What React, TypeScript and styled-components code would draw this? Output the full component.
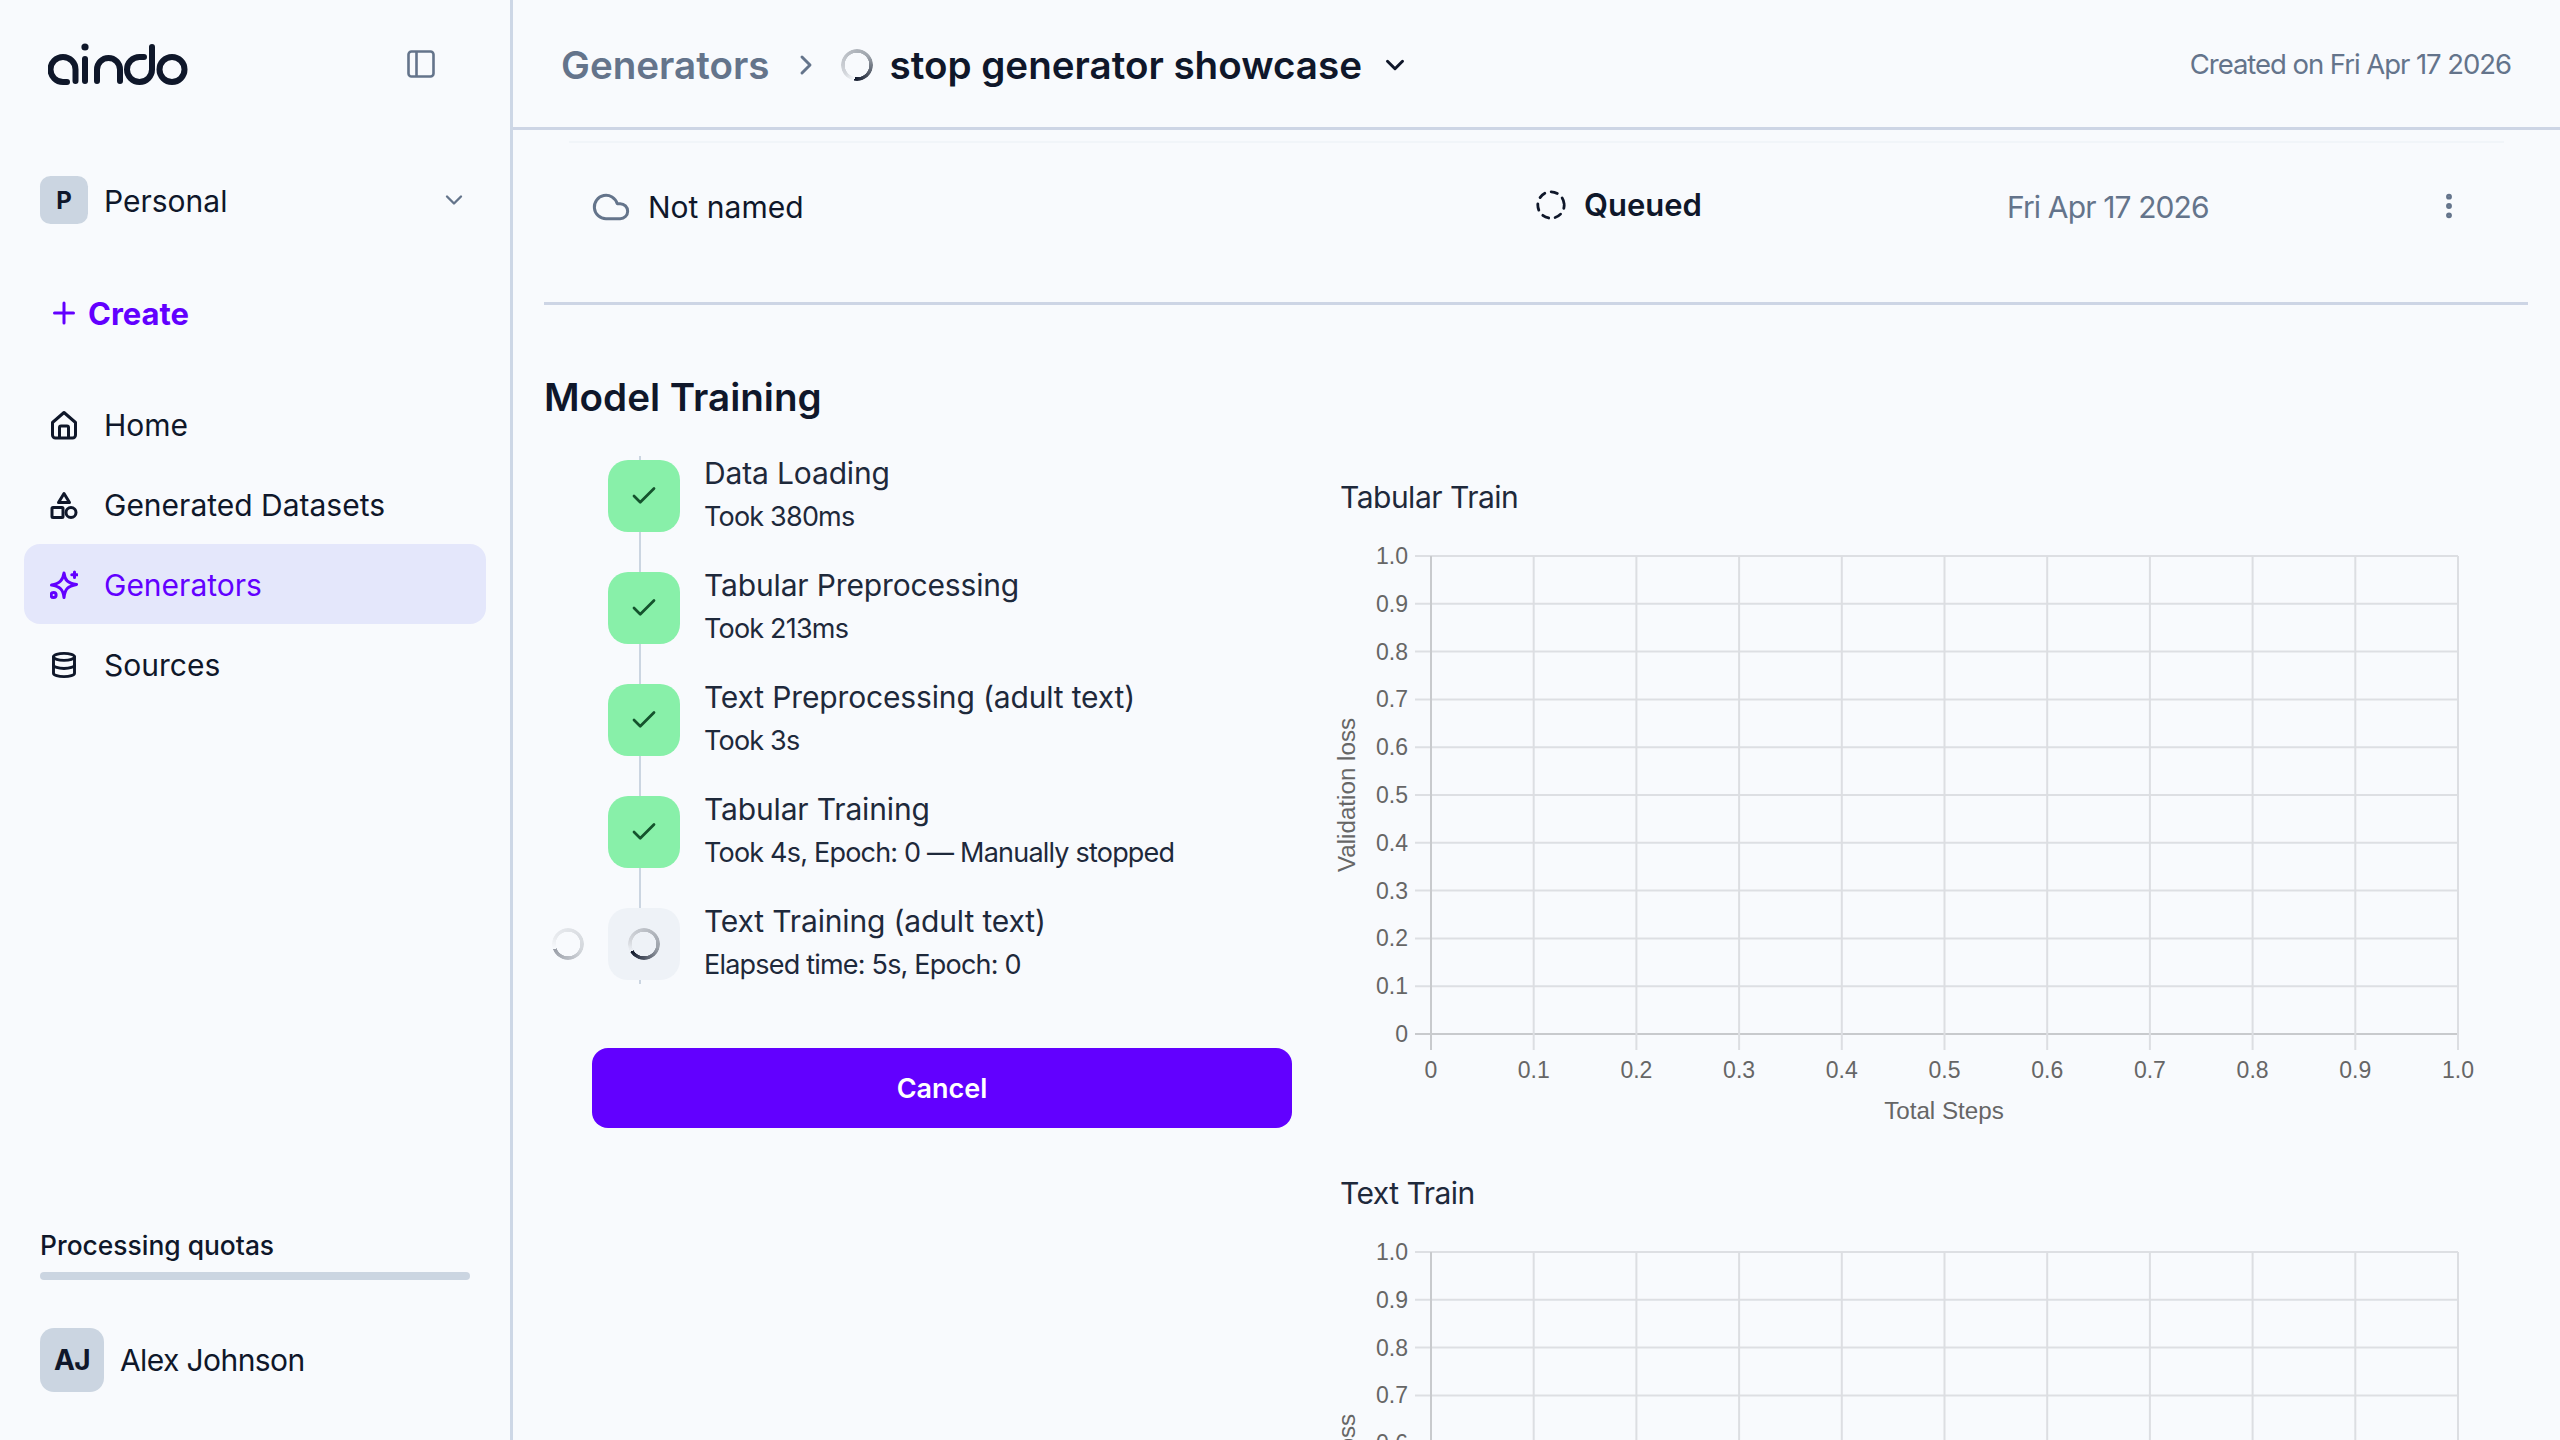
import styled, { createGlobalStyle } from 'styled-components';
import { Check, ChevronDown, ChevronRight, Cloud, Database, EllipsisVertical } from 'lucide-react';

const GlobalStyle = createGlobalStyle`
  html, body {
    margin: 0;
    padding: 0;
    background: #f8fafd;
  }

  body {
    font-family: Inter, "Noto Sans", sans-serif;
    color: #0f172a;
  }

  * {
    box-sizing: border-box;
  }
`;

const Page = styled.div`
  display: flex;
  width: 2560px;
  height: 1440px;
  overflow: hidden;
  background: #f8fafd;
`;

const Sidebar = styled.aside`
  display: flex;
  flex-direction: column;
  flex: 0 0 513px;
  border-right: 3px solid #cdd7e6;
`;

const LogoRow = styled.div`
  display: flex;
  align-items: center;
  justify-content: space-between;
  height: 128px;
  padding: 0 75px 0 48px;
`;

const Workspace = styled.div`
  display: flex;
  align-items: center;
  margin-top: 48px;
  padding: 0 42px 0 40px;
  font-size: 30px;
`;

const AvatarSquare = styled.div<{ $size: number }>`
  display: flex;
  align-items: center;
  justify-content: center;
  flex: none;
  width: ${p => p.$size}px;
  height: ${p => p.$size}px;
  border-radius: ${p => p.$size * 0.22}px;
  background: #cbd5e1;
  font-size: ${p => (p.$size > 50 ? 28 : 24)}px;
  font-weight: 700;
`;

const WorkspaceName = styled.span`
  flex: 1;
  margin-left: 16px;
  padding-top: 1px;
`;

const CreateRow = styled.div`
  display: flex;
  align-items: center;
  gap: 13px;
  height: 48px;
  margin-top: 65px;
  padding-left: 53px;
  color: #6200ff;
  font-size: 31px;
  font-weight: 700;
`;

const Nav = styled.nav`
  display: flex;
  flex-direction: column;
  margin-top: 47px;
`;

const NavItem = styled.div<{ $active?: boolean }>`
  display: flex;
  align-items: center;
  gap: 26px;
  width: 462px;
  height: 80px;
  margin-left: 24px;
  padding: 2px 0 0 26px;
  border-radius: 16px;
  background: ${p => (p.$active ? '#e4e7fb' : 'transparent')};
  color: ${p => (p.$active ? '#6200ff' : '#0f172a')};
  font-size: 30px;
  svg {
    flex: none;
  }
`;

const SideFooter = styled.div`
  display: flex;
  flex-direction: column;
  margin-top: auto;
  padding: 0 40px 48px;
`;

const QuotaLabel = styled.div`
  font-size: 26.4px;
  font-weight: 500;
  line-height: 32px;
`;

const QuotaBar = styled.div`
  width: 430px;
  height: 8px;
  margin-top: 11px;
  border-radius: 4px;
  background: #cbd5e1;
`;

const UserRow = styled.div`
  display: flex;
  align-items: center;
  gap: 16px;
  margin-top: 48px;
  font-size: 30px;
  letter-spacing: -0.6px;
`;

const Main = styled.main`
  display: flex;
  flex-direction: column;
  flex: 1;
  min-width: 0;
`;

const Header = styled.header`
  display: flex;
  align-items: center;
  justify-content: space-between;
  flex: none;
  height: 130px;
  padding: 0 49px 0 48px;
  border-bottom: 3px solid #cdd5e5;
`;

const Crumbs = styled.div`
  display: flex;
  align-items: center;
  padding-top: 2px;
  font-size: 38.6px;
  font-weight: 600;
`;

const CrumbParent = styled.span`
  color: #64748b;
`;

const CrumbChevron = styled(ChevronRight)`
  margin: 0 19px 0 21px;
  color: #64748b;
`;

const CrumbTitle = styled.span`
  margin: 0 18px 0 16px;
`;

const HeaderDate = styled.span`
  padding-top: 1px;
  color: #64748b;
  font-size: 27.5px;
  letter-spacing: -1.05px;
`;

const Spinner = styled.div<{ $size: number; $from: number; $faded?: boolean }>`
  flex: none;
  width: ${p => p.$size}px;
  height: ${p => p.$size}px;
  border-radius: 50%;
  background: conic-gradient(
    from ${p => p.$from}deg,
    transparent 0%,
    #d4d7dc 12%,
    #9ea4ac 62%,
    #0f172a 100%
  );
  -webkit-mask: radial-gradient(farthest-side, transparent calc(100% - 4px), #000 calc(100% - 3.5px));
  mask: radial-gradient(farthest-side, transparent calc(100% - 4px), #000 calc(100% - 3.5px));
  opacity: ${p => (p.$faded ? 0.4 : 1)};
`;

const Content = styled.div`
  flex: 1;
  min-height: 0;
  overflow: hidden;
  padding: 0 32px 0 31px;
`;

const TopRule = styled.div`
  height: 2px;
  margin: 11px 24px 0 25px;
  background: #f1f5f9;
`;

const RunRow = styled.div`
  display: grid;
  grid-template-columns: 945px 471px 426px 1fr;
  align-items: center;
  height: 162px;
  padding: 0 0 32px 47px;
  border-bottom: 3px solid #cdd5e5;
  font-size: 30px;
`;

const RunName = styled.div`
  display: flex;
  align-items: center;
  gap: 17px;
  svg {
    color: #64748b;
  }
`;

const RunStatus = styled.div`
  display: flex;
  align-items: center;
  gap: 18px;
  margin-top: -4px;
  font-size: 31px;
  font-weight: 600;
`;

const RunDate = styled.div`
  color: #64748b;
  letter-spacing: -0.87px;
`;

const RunMenu = styled(EllipsisVertical)`
  color: #64748b;
  margin-top: -2px;
`;

const SectionTitle = styled.h2`
  margin: 68px 0 0;
  font-size: 38.6px;
  font-weight: 600;
  line-height: 48px;
`;

const Body = styled.div`
  display: grid;
  grid-template-columns: 798px 1fr;
  margin-top: 35px;
`;

const StepColumn = styled.div`
  display: flex;
  flex-direction: column;
`;

const Stepper = styled.div`
  position: relative;
  display: flex;
  flex-direction: column;
  gap: 40px;
  margin: 4px 0 0 64px;
  &::before {
    content: '';
    position: absolute;
    left: 31px;
    top: -4px;
    bottom: -4px;
    width: 2px;
    background: #cbd5e1;
  }
`;

const Step = styled.div`
  position: relative;
  display: flex;
  gap: 24px;
  height: 72px;
`;

const StepBox = styled.div<{ $done?: boolean }>`
  position: relative;
  display: flex;
  align-items: center;
  justify-content: center;
  flex: none;
  width: 72px;
  height: 72px;
  border-radius: 20px;
  background: ${p => (p.$done ? '#88f0a9' : '#eef2f7')};
  color: #14532d;
`;

const StepSideSpinner = styled.div`
  position: absolute;
  left: -56px;
  top: 20px;
`;

const StepText = styled.div`
  display: flex;
  flex-direction: column;
  gap: 8px;
  margin-top: -5px;
`;

const StepTitle = styled.div`
  color: #1e293b;
  font-size: 30px;
  letter-spacing: -0.15px;
  line-height: 36px;
`;

const StepDetail = styled.div`
  color: #1e293b;
  font-size: 27px;
  letter-spacing: -0.8px;
  line-height: 36px;
`;

const CancelButton = styled.button`
  width: 700px;
  height: 80px;
  margin: 68px 0 0 48px;
  border: none;
  border-radius: 16px;
  background: #6200ff;
  color: #fff;
  font-family: inherit;
  font-size: 27px;
  font-weight: 600;
`;

const ChartColumn = styled.div`
  display: flex;
  flex-direction: column;
  gap: 35px;
  margin-top: 23px;
`;

const ChartBlock = styled.section`
  display: flex;
  flex-direction: column;
  gap: 15px;
`;

const ChartTitle = styled.div`
  margin-left: -2px;
  color: #1e293b;
  font-size: 30px;
  letter-spacing: -0.5px;
  line-height: 36px;
`;

const ChartSvg = styled.svg`
  display: block;
  overflow: visible;
  flex: none;
  text {
    fill: #666;
    font-family: "Liberation Sans", Arial, sans-serif;
    font-size: 23px;
  }
`;

const AxisLabel = styled.text`
  && {
    font-size: 24.2px;
  }
`;

function Logo() {
  return (
    <svg width="140" height="44" viewBox="48 42 140 44" fill="none" stroke="#0f172a" strokeWidth="6" strokeLinecap="round" aria-label="aindo">
      <path d="M75.5 81V69.5A12.5 12.5 0 1 0 63 82H67" />
      <path d="M85 59V81" />
      <circle cx="85" cy="47" r="3.6" fill="#0f172a" stroke="none" />
      <path d="M97 81V69.5A11.5 11.5 0 0 1 120 69.5V81" />
      <path d="M152 47V69.5A12.5 12.5 0 1 1 139.5 57H144" />
      <circle cx="172" cy="69.5" r="12.5" />
    </svg>
  );
}

function PanelIcon() {
  return (
    <svg width="28" height="28" viewBox="0 0 28 28" fill="none" stroke="#64748b" strokeWidth="2.6" strokeLinejoin="round">
      <rect x="1.5" y="1.5" width="25" height="25" rx="3" />
      <path d="M9.5 1.5V26.5" />
    </svg>
  );
}

function PlusIcon() {
  return (
    <svg width="22" height="24" viewBox="0 0 22 24" fill="none" stroke="#6200ff" strokeWidth="3" strokeLinecap="round">
      <path d="M11 2V22M1.5 12H20.5" />
    </svg>
  );
}

function HomeIcon() {
  return (
    <svg width="28" height="30" viewBox="0 0 28 30" fill="none" stroke="currentColor" strokeWidth="3" strokeLinejoin="round">
      <path d="M2.5 12.5L14 2.5L25.5 12.5V25a3 3 0 0 1-3 3H5.5a3 3 0 0 1-3-3Z" />
      <path d="M9.5 28V17.5a1.5 1.5 0 0 1 1.5-1.5h6a1.5 1.5 0 0 1 1.5 1.5V28" />
    </svg>
  );
}

function ShapesIcon() {
  return (
    <svg width="28" height="28" viewBox="0 0 28 28" fill="none" stroke="currentColor" strokeWidth="3" strokeLinejoin="round">
      <path d="M14 2.5L19.5 11.5H8.5Z" />
      <rect x="2" y="16.5" width="11" height="10" rx="1" />
      <circle cx="21" cy="21.5" r="5" />
    </svg>
  );
}

function SparkIcon() {
  return (
    <svg width="28" height="30" viewBox="0 0 28 30" fill="none" stroke="currentColor" strokeWidth="3" strokeLinecap="round" strokeLinejoin="round">
      <path d="M14 3C14.8 10 17.5 13 26.5 14.5C17.5 16.5 15 19 14 27.5C13 19.5 10 16.5 1.5 15C10 13.5 13 10 14 3Z" />
      <path d="M24.5 2V7.5M21.8 4.8H27.2" />
      <circle cx="3.6" cy="25" r="2.5" />
    </svg>
  );
}

function QueuedIcon() {
  return (
    <svg width="30" height="30" viewBox="0 0 30 30" fill="none" stroke="#0f172a" strokeWidth="2.8" strokeLinecap="round">
      <circle cx="15" cy="15" r="13.2" strokeDasharray="6.4 6.6" strokeDashoffset="3" />
    </svg>
  );
}

const TICKS = [0, 0.1, 0.2, 0.3, 0.4, 0.5, 0.6, 0.7, 0.8, 0.9, 1];
const tickLabel = (v: number) => (v === 0 ? '0' : v.toFixed(1));

function TrainChart() {
  const left = 89;
  const right = 1116;
  const top = 26;
  const bottom = 504;
  const stepX = (right - left) / 10;
  const stepY = (bottom - top) / 10;
  return (
    <ChartSvg width="1180" height="610" viewBox="0 0 1180 610">
      {TICKS.map((v, i) => {
        const y = bottom - i * stepY;
        return (
          <g key={v}>
            <line x1={left - 16} x2={right} y1={y} y2={y} stroke={i === 0 ? '#c8cacd' : '#dddfe3'} strokeWidth="2" />
            <text x={left - 23} y={y + 8} textAnchor="end">{tickLabel(v)}</text>
          </g>
        );
      })}
      {TICKS.map((v, i) => {
        const x = left + i * stepX;
        return (
          <g key={v}>
            <line x1={x} x2={x} y1={top} y2={bottom + 16} stroke={i === 0 ? '#c8cacd' : '#dcdee2'} strokeWidth="2" />
            <text x={x} y={548} textAnchor="middle">{tickLabel(v)}</text>
          </g>
        );
      })}
      <AxisLabel x={602} y={589} textAnchor="middle">Total Steps</AxisLabel>
      <AxisLabel x={13} y={265} textAnchor="middle" transform="rotate(-90 13 265)">Validation loss</AxisLabel>
    </ChartSvg>
  );
}

const STEPS = [
  { title: 'Data Loading', detail: 'Took 380ms', done: true },
  { title: 'Tabular Preprocessing', detail: 'Took 213ms', done: true },
  { title: 'Text Preprocessing (adult text)', detail: 'Took 3s', done: true },
  { title: 'Tabular Training', detail: 'Took 4s, Epoch: 0 — Manually stopped', done: true },
  { title: 'Text Training (adult text)', detail: 'Elapsed time: 5s, Epoch: 0', done: false },
];

export default function App() {
  return (
    <Page>
      <GlobalStyle />
      <Sidebar>
        <LogoRow>
          <Logo />
          <PanelIcon />
        </LogoRow>
        <Workspace>
          <AvatarSquare $size={48}>P</AvatarSquare>
          <WorkspaceName>Personal</WorkspaceName>
          <ChevronDown size={28} color="#64748b" strokeWidth={2} />
        </Workspace>
        <CreateRow>
          <PlusIcon />
          Create
        </CreateRow>
        <Nav>
          <NavItem><HomeIcon />Home</NavItem>
          <NavItem><ShapesIcon />Generated Datasets</NavItem>
          <NavItem $active><SparkIcon />Generators</NavItem>
          <NavItem><Database size={28} strokeWidth={2.5} />Sources</NavItem>
        </Nav>
        <SideFooter>
          <QuotaLabel>Processing quotas</QuotaLabel>
          <QuotaBar />
          <UserRow>
            <AvatarSquare $size={64}>AJ</AvatarSquare>
            Alex Johnson
          </UserRow>
        </SideFooter>
      </Sidebar>
      <Main>
        <Header>
          <Crumbs>
            <CrumbParent>Generators</CrumbParent>
            <CrumbChevron size={32} strokeWidth={2.2} />
            <Spinner $size={32} $from={190} />
            <CrumbTitle>stop generator showcase</CrumbTitle>
            <ChevronDown size={30} strokeWidth={2.4} />
          </Crumbs>
          <HeaderDate>Created on Fri Apr 17 2026</HeaderDate>
        </Header>
        <Content>
          <TopRule />
          <RunRow>
            <RunName><Cloud size={40} strokeWidth={1.8} />Not named</RunName>
            <RunStatus><QueuedIcon />Queued</RunStatus>
            <RunDate>Fri Apr 17 2026</RunDate>
            <RunMenu size={32} strokeWidth={2.4} />
          </RunRow>
          <SectionTitle>Model Training</SectionTitle>
          <Body>
            <StepColumn>
              <Stepper>
                {STEPS.map(step => (
                  <Step key={step.title}>
                    {!step.done && (
                      <StepSideSpinner><Spinner $size={32} $from={250} $faded /></StepSideSpinner>
                    )}
                    <StepBox $done={step.done}>
                      {step.done ? <Check size={30} strokeWidth={2.2} /> : <Spinner $size={32} $from={240} />}
                    </StepBox>
                    <StepText>
                      <StepTitle>{step.title}</StepTitle>
                      <StepDetail>{step.detail}</StepDetail>
                    </StepText>
                  </Step>
                ))}
              </Stepper>
              <CancelButton>Cancel</CancelButton>
            </StepColumn>
            <ChartColumn>
              <ChartBlock>
                <ChartTitle>Tabular Train</ChartTitle>
                <TrainChart />
              </ChartBlock>
              <ChartBlock>
                <ChartTitle>Text Train</ChartTitle>
                <TrainChart />
              </ChartBlock>
            </ChartColumn>
          </Body>
        </Content>
      </Main>
    </Page>
  );
}
